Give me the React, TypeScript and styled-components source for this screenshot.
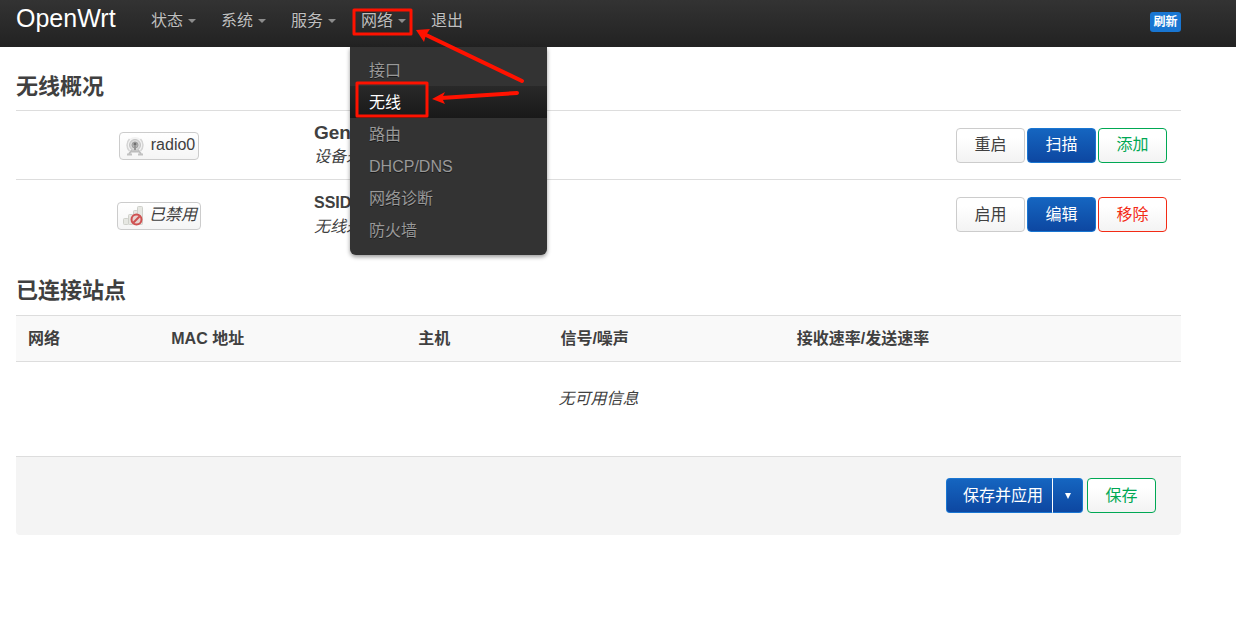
import React from 'react';
import styled, { createGlobalStyle, css } from 'styled-components';

const GlobalStyle = createGlobalStyle`
  *, *::before, *::after { box-sizing: border-box; }
  body {
    margin: 0;
    background: #fff;
    color: #404040;
    font: 16px/24px "Liberation Sans", "Noto Sans CJK SC", sans-serif;
  }
  button { font: inherit; cursor: pointer; }
`;

const Header = styled.header`
  position: relative;
  z-index: 2;
  display: flex;
  height: 47px;
  padding: 0 55px 0 16px;
  background: linear-gradient(#333, #222);
`;

const Brand = styled.a`
  width: 124px;
  color: #fff;
  font-size: 25px;
  line-height: 36px;
  text-decoration: none;
`;

const NavList = styled.ul`
  display: flex;
  flex: 1;
  margin: 0;
  padding: 0;
  list-style: none;
`;

const NavItem = styled.li`
  position: relative;
`;

const NavLink = styled.a`
  display: flex;
  align-items: center;
  gap: 5px;
  height: 42px;
  padding: 0 14px 0 11px;
  color: #bfbfbf;
  text-decoration: none;
  text-shadow: 0 -1px 0 rgba(0, 0, 0, 0.25);
`;

const Caret = styled.span`
  border: 4px solid transparent;
  border-top-color: #8c8c8c;
  border-bottom: 0;
`;

const Menu = styled.ul`
  position: absolute;
  top: 47px;
  left: 0;
  width: 197px;
  margin: 0;
  padding: 7px 0 9px;
  list-style: none;
  background: #333;
  border-radius: 0 0 6px 6px;
  box-shadow: 0 2px 4px rgba(0, 0, 0, 0.4);
`;

const MenuLink = styled.a<{ $active?: boolean }>`
  display: block;
  padding: 2px 19px 0;
  line-height: 30px;
  color: #999;
  text-decoration: none;
  text-shadow: 0 1px 0 rgba(0, 0, 0, 0.5);
  ${(p) => p.$active && css`
    color: #fff;
    background: linear-gradient(#292929, #191919);
  `}
`;

const RefreshBadge = styled.button`
  align-self: flex-start;
  height: 20px;
  min-width: 31px;
  margin-top: 12px;
  padding: 1px 3px 0;
  border: 0;
  border-radius: 3px;
  background: #1976d2;
  color: #fff;
  font-size: 12px;
  font-weight: bold;
  line-height: 19px;
`;

const Page = styled.main`
  padding: 22px 55px 0 16px;
`;

const Title = styled.h2`
  margin: 0;
  font-size: 22px;
  line-height: 36px;
`;

const DeviceTable = styled.table`
  width: 100%;
  margin: 5px 0 24px;
  border-collapse: separate;
  border-spacing: 0;
  td {
    height: 70px;
    padding: 0 14px 0 12px;
    border-top: 1px solid #ddd;
  }
  tr:first-child td { height: 69px; }
  td:first-child {
    width: 286px;
    padding: 2px 0 0;
    text-align: center;
  }
  td:last-child { text-align: right; }
`;

const IfaceBadge = styled.span`
  display: inline-flex;
  align-items: center;
  gap: 6px;
  height: 28px;
  padding: 0 3px 2px 5px;
  border: 1px solid #ccc;
  border-radius: 4px;
  background: linear-gradient(#fff, #f5f5f5);
  vertical-align: middle;
  svg { margin-top: 3px; }
`;

const DeviceName = styled.strong<{ $large?: boolean }>`
  display: block;
  font-size: ${(p) => (p.$large ? 19 : 16)}px;
`;

const ButtonGroup = styled.div`
  display: flex;
  justify-content: flex-end;
  gap: 2px;
`;

type Tone = 'neutral' | 'primary' | 'positive' | 'negative';

const tones: Record<Tone, ReturnType<typeof css>> = {
  neutral: css`border-color: #ccc; color: #404040;`,
  primary: css`border-color: #1976d2; color: #fff; background: linear-gradient(#1565c0, #0d47a1);`,
  positive: css`border-color: #00a854; color: #00a854;`,
  negative: css`border-color: #f32b15; color: #f32b15;`,
};

const Button = styled.button<{ $tone: Tone }>`
  min-width: 69px;
  height: 35px;
  padding: 0 16px;
  border: 1px solid;
  border-radius: 4px;
  background: linear-gradient(#fff 25%, #f3f3f3);
  line-height: 24px;
  ${(p) => tones[p.$tone]}
`;

const StationTable = styled.table`
  width: 100%;
  margin-top: 6px;
  table-layout: fixed;
  border-collapse: separate;
  border-spacing: 0;
  th {
    height: 47px;
    padding: 0 12px;
    border: 1px solid #ddd;
    border-width: 1px 0;
    background: #f9f9f9;
    text-align: left;
  }
  td {
    height: 74px;
    text-align: center;
    font-style: italic;
  }
`;

const Actions = styled.div`
  display: flex;
  justify-content: flex-end;
  gap: 4px;
  height: 79px;
  margin-top: 20px;
  padding: 21px 25px;
  border-top: 1px solid #ddd;
  border-radius: 0 0 4px 4px;
  background: #f4f4f4;
`;

const SplitButton = styled.div`
  display: flex;
`;

const SplitMain = styled(Button)`
  padding: 0 9px 0 16px;
  border-right: 0;
  border-radius: 4px 0 0 4px;
`;

const SplitToggle = styled(Button)`
  min-width: 0;
  width: 31px;
  padding: 0;
  border-left-color: #fff;
  border-radius: 0 4px 4px 0;
  svg { display: block; margin: 0 auto; }
`;

const Annotations = styled.svg`
  position: absolute;
  z-index: 3;
  top: 0;
  left: 0;
  pointer-events: none;
`;

const RadioIcon = () => (
  <svg width="20" height="19" viewBox="0 0 20 19" aria-hidden="true">
    <circle cx="10" cy="8" r="8" fill="#f2f2f2" />
    <path d="M4.500 2a8.500 8.500 0 0 0 0 12M15.500 2a8.500 8.500 0 0 1 0 12" fill="none" stroke="#d4d4d4" strokeWidth="1.500" />
    <circle cx="10" cy="8" r="5.500" fill="#dadada" stroke="#c4c4c4" />
    <circle cx="10" cy="8" r="3" fill="#b5b5b5" stroke="#a0a0a0" />
    <circle cx="10" cy="7" r="1.500" fill="#707070" />
    <path d="M10 8v5" stroke="#959595" strokeWidth="2" />
    <path d="M7 13l-3 4M13 13l3 4M6 14.500h8" fill="none" stroke="#bdbdbd" strokeWidth="2" />
    <path d="M2 17.500h5M13 17.500h5" stroke="#c2c2c2" strokeWidth="2" />
  </svg>
);

const DisabledSignalIcon = () => (
  <svg width="20" height="20" viewBox="0 0 20 20" aria-hidden="true">
    <g fill="#e6e7e2" stroke="#cfd0ca">
      <rect x="0.500" y="12.500" width="5" height="6" rx="1" />
      <rect x="5.500" y="8.500" width="5" height="10" rx="1" />
      <rect x="10.500" y="4.500" width="4" height="14" rx="1" />
      <rect x="14.500" y="0.500" width="5" height="18" rx="1" />
    </g>
    <circle cx="13.500" cy="13.500" r="5" fill="#e8d3d0" stroke="#cf5050" strokeWidth="2" />
    <path d="M10.300 16.700l6.400-6.400" stroke="#cf5050" strokeWidth="2" />
  </svg>
);

const navItems = ['状态', '系统', '服务', '网络'];
const menuItems = ['接口', '无线', '路由', 'DHCP/DNS', '网络诊断', '防火墙'];

export default function App() {
  return (
    <>
      <GlobalStyle />
      <Header>
        <Brand href="#">OpenWrt</Brand>
        <NavList>
          {navItems.map((label) => (
            <NavItem key={label}>
              <NavLink href="#">{label}<Caret /></NavLink>
              {label === '网络' && (
                <Menu>
                  {menuItems.map((item) => (
                    <li key={item}><MenuLink href="#" $active={item === '无线'}>{item}</MenuLink></li>
                  ))}
                </Menu>
              )}
            </NavItem>
          ))}
          <NavItem><NavLink href="#">退出</NavLink></NavItem>
        </NavList>
        <RefreshBadge type="button">刷新</RefreshBadge>
      </Header>

      <Page>
        <Title>无线概况</Title>
        <DeviceTable>
          <tbody>
            <tr>
              <td><IfaceBadge><RadioIcon />radio0</IfaceBadge></td>
              <td><DeviceName $large>Generic</DeviceName><em>设备未激活</em></td>
              <td>
                <ButtonGroup>
                  <Button type="button" $tone="neutral">重启</Button>
                  <Button type="button" $tone="primary">扫描</Button>
                  <Button type="button" $tone="positive">添加</Button>
                </ButtonGroup>
              </td>
            </tr>
            <tr>
              <td><IfaceBadge><DisabledSignalIcon /><em>已禁用</em></IfaceBadge></td>
              <td><DeviceName>SSID: OpenWrt</DeviceName><em>无线未开启</em></td>
              <td>
                <ButtonGroup>
                  <Button type="button" $tone="neutral">启用</Button>
                  <Button type="button" $tone="primary">编辑</Button>
                  <Button type="button" $tone="negative">移除</Button>
                </ButtonGroup>
              </td>
            </tr>
          </tbody>
        </DeviceTable>

        <Title>已连接站点</Title>
        <StationTable>
          <colgroup>
            <col style={{ width: '12.3%' }} />
            <col style={{ width: '21.2%' }} />
            <col style={{ width: '12.2%' }} />
            <col style={{ width: '20.3%' }} />
            <col />
          </colgroup>
          <thead>
            <tr>
              <th>网络</th>
              <th>MAC 地址</th>
              <th>主机</th>
              <th>信号/噪声</th>
              <th>接收速率/发送速率</th>
            </tr>
          </thead>
          <tbody>
            <tr><td colSpan={5}>无可用信息</td></tr>
          </tbody>
        </StationTable>

        <Actions>
          <SplitButton>
            <SplitMain type="button" $tone="primary">保存并应用</SplitMain>
            <SplitToggle type="button" $tone="primary" aria-label="更多">
              <svg width="8" height="6" viewBox="0 0 8 6"><path d="M1 0h6L4 6z" fill="#fff" /></svg>
            </SplitToggle>
          </SplitButton>
          <Button type="button" $tone="positive">保存</Button>
        </Actions>
      </Page>

      <Annotations width="560" height="130" viewBox="0 0 560 130" aria-hidden="true">
        <g fill="none" stroke="#ff1200" strokeWidth="3" strokeLinejoin="round">
          <rect x="354" y="10" width="57" height="24" />
          <rect x="357" y="83" width="70" height="33" />
        </g>
        <g stroke="#ff1200" strokeWidth="4" strokeLinecap="round">
          <path d="M522 81L424 34" />
          <path d="M517 93L441 98" />
        </g>
        <g fill="#ff1200">
          <path d="M416 30L430 29L426 35L424 42z" />
          <path d="M432 99L445 92L442 98L445 104z" />
        </g>
      </Annotations>
    </>
  );
}
